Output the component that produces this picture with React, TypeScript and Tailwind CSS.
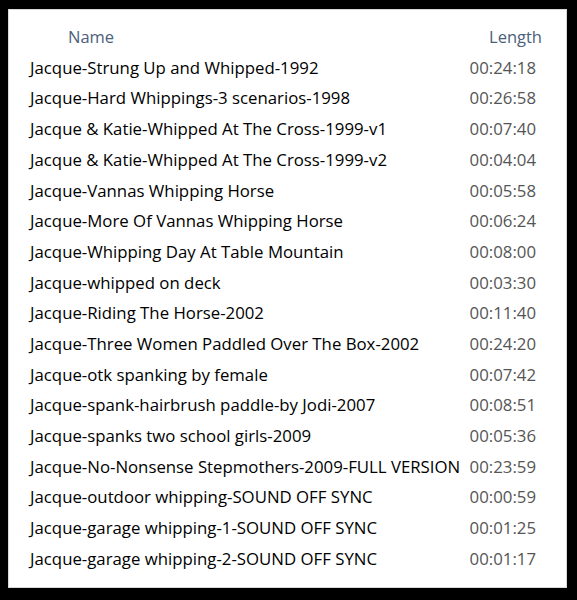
import React from 'react';

const files = [
  ['Jacque-Strung Up and Whipped-1992', '00:24:18'],
  ['Jacque-Hard Whippings-3 scenarios-1998', '00:26:58'],
  ['Jacque & Katie-Whipped At The Cross-1999-v1', '00:07:40'],
  ['Jacque & Katie-Whipped At The Cross-1999-v2', '00:04:04'],
  ['Jacque-Vannas Whipping Horse', '00:05:58'],
  ['Jacque-More Of Vannas Whipping Horse', '00:06:24'],
  ['Jacque-Whipping Day At Table Mountain', '00:08:00'],
  ['Jacque-whipped on deck', '00:03:30'],
  ['Jacque-Riding The Horse-2002', '00:11:40'],
  ['Jacque-Three Women Paddled Over The Box-2002', '00:24:20'],
  ['Jacque-otk spanking by female', '00:07:42'],
  ['Jacque-spank-hairbrush paddle-by Jodi-2007', '00:08:51'],
  ['Jacque-spanks two school girls-2009', '00:05:36'],
  ['Jacque-No-Nonsense Stepmothers-2009-FULL VERSION', '00:23:59'],
  ['Jacque-outdoor whipping-SOUND OFF SYNC', '00:00:59'],
  ['Jacque-garage whipping-1-SOUND OFF SYNC', '00:01:25'],
  ['Jacque-garage whipping-2-SOUND OFF SYNC', '00:01:17'],
];

export default function App() {
  return (
    <div className="w-[577px] h-[600px] bg-black pt-[9px] pl-[8px] pr-[10px] pb-[12px]">
      <div
        className="h-full bg-white border border-[#d8d8d8] pl-[21px] pr-[24px] pt-[12px]"
        style={{ fontFamily: '"Open Sans", "Noto Sans", sans-serif' }}
      >
        <div className="flex justify-between h-[30px] items-center text-[16.5px] text-[#4c607a]">
          <span className="pl-[38px]">Name</span>
          <span>Length</span>
        </div>
        <div className="flex flex-col">
          {files.map(([name, len]) => (
            <div key={name} className="flex justify-between items-center h-[30.7px] text-[16.8px] pr-[6px]">
              <span className="text-black">{name}</span>
              <span className="text-[#555]">{len}</span>
            </div>
          ))}
        </div>
      </div>
    </div>
  );
}
